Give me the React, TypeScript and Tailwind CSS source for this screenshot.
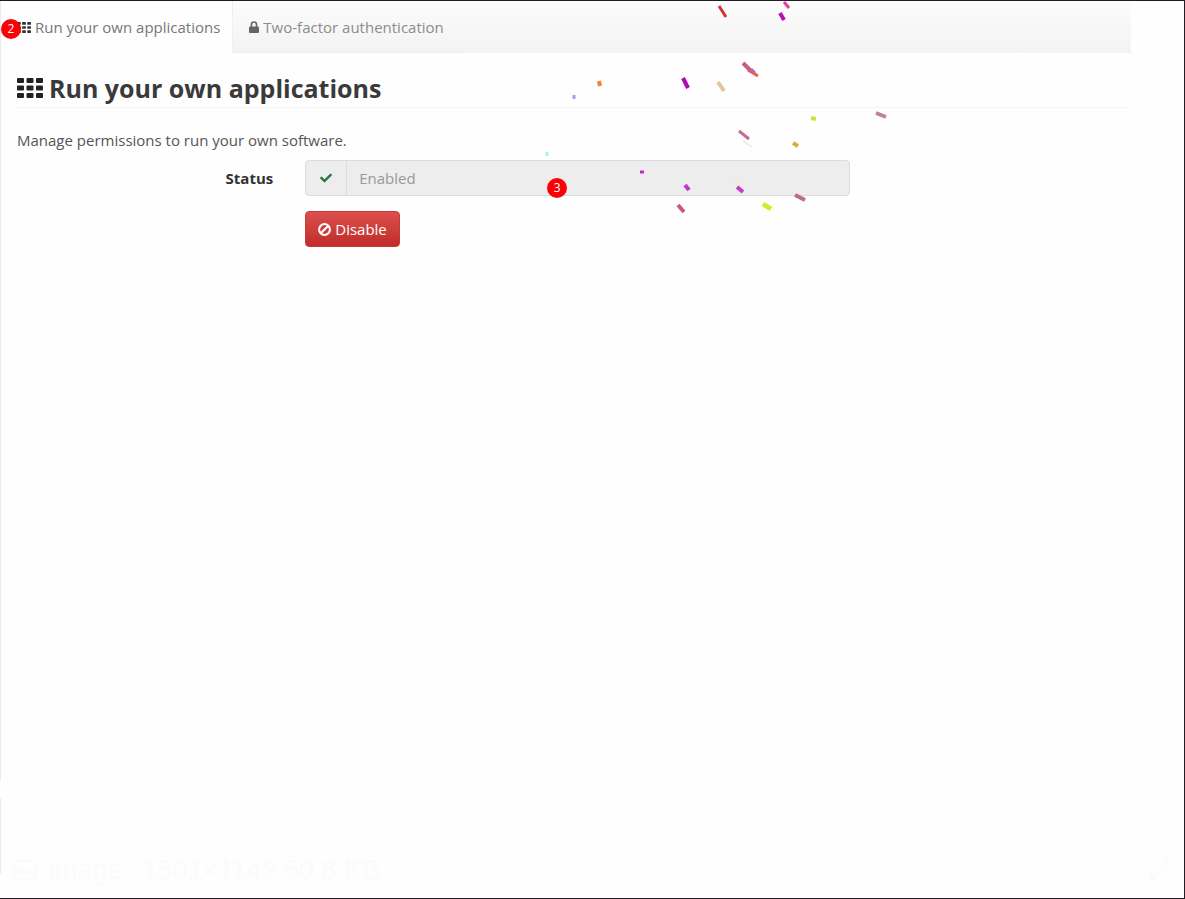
import { FaCheck } from "react-icons/fa";

type Piece = {
  x1: number;
  y1: number;
  x2: number;
  y2: number;
  color: string;
  width?: number;
};

const confetti: Piece[] = [
  { x1: 719, y1: 6, x2: 726, y2: 17, color: "#dc3030" },
  { x1: 784, y1: 2, x2: 789, y2: 8, color: "#e83aa5" },
  { x1: 780, y1: 13, x2: 784, y2: 20, color: "#b411b9", width: 4 },
  { x1: 748, y1: 70, x2: 758, y2: 76, color: "#f0603c" },
  { x1: 743, y1: 63, x2: 751, y2: 71, color: "#c9607f", width: 4 },
  { x1: 751, y1: 69, x2: 755, y2: 73, color: "#b565bd" },
  { x1: 718, y1: 82, x2: 724, y2: 91, color: "#e3c79c", width: 4 },
  { x1: 683, y1: 78, x2: 688, y2: 88, color: "#b306b6", width: 4 },
  { x1: 599, y1: 81, x2: 600, y2: 86, color: "#f5802e", width: 4 },
  { x1: 574, y1: 95, x2: 574, y2: 99, color: "#a79bfa", width: 3 },
  { x1: 547, y1: 152, x2: 547, y2: 156, color: "#a8f7e2", width: 3 },
  { x1: 640, y1: 172, x2: 644, y2: 172, color: "#bd2cc4", width: 3 },
  { x1: 685, y1: 185, x2: 689, y2: 190, color: "#bd3cc6", width: 4 },
  { x1: 678, y1: 205, x2: 684, y2: 212, color: "#c85a76", width: 4 },
  { x1: 811, y1: 118, x2: 816, y2: 119, color: "#c5e63f", width: 4 },
  { x1: 876, y1: 113, x2: 886, y2: 117, color: "#bd8398", width: 4 },
  { x1: 739, y1: 131, x2: 749, y2: 139, color: "#bf6f97" },
  { x1: 743, y1: 141, x2: 752, y2: 147, color: "#f8ecdc", width: 2 },
  { x1: 793, y1: 143, x2: 798, y2: 146, color: "#dcae36", width: 4 },
  { x1: 735, y1: 182, x2: 740, y2: 186, color: "#f6e8bf", width: 2 },
  { x1: 737, y1: 187, x2: 743, y2: 192, color: "#c63cce", width: 4 },
  { x1: 795, y1: 195, x2: 805, y2: 200, color: "#bc6b92", width: 4 },
  { x1: 763, y1: 204, x2: 771, y2: 209, color: "#c8f02c", width: 5 },
];

const Confetti = () => (
  <svg
    className="pointer-events-none absolute left-0 top-0"
    width="900"
    height="220"
    viewBox="0 1 900 220"
    aria-hidden="true"
  >
    {confetti.map((p, i) => (
      <line
        key={i}
        x1={p.x1}
        y1={p.y1}
        x2={p.x2}
        y2={p.y2}
        stroke={p.color}
        strokeWidth={p.width ?? 3}
      />
    ))}
  </svg>
);

const GridIcon = ({ className }: { className: string }) => (
  <svg className={className} viewBox="0 0 26 20" fill="currentColor" aria-hidden="true">
    {[0, 7.5, 15].map((y) =>
      [0, 9.5, 19].map((x) => (
        <rect key={`${x}-${y}`} x={x} y={y} width="7" height="5" rx="1" />
      ))
    )}
  </svg>
);

const LockIcon = () => (
  <svg className="h-3 w-2.5" viewBox="0 0 10 12" aria-hidden="true">
    <path d="M2.5 6V3.5a2.5 2.5 0 0 1 5 0V6" fill="none" stroke="currentColor" strokeWidth="1.6" />
    <rect y="5.5" width="10" height="6.5" rx="0.9" fill="currentColor" />
  </svg>
);

const BanIcon = () => (
  <svg className="size-[13px]" viewBox="0 0 12 12" fill="none" stroke="currentColor" strokeWidth="1.9" aria-hidden="true">
    <circle cx="6" cy="6" r="5" />
    <path d="M2.5 9.5 9.5 2.5" />
  </svg>
);

const App = () => {
  return (
    <div className="relative flex min-h-screen border-y border-r border-[#1f1d20] bg-[#fefefe] font-['Open_Sans',sans-serif] text-[15px] leading-5 text-[#555]">
      {/* Left edge */}
      <div className="flex w-px flex-col gap-[18px] pb-6">
        <div className="grow bg-[#e8ebef]" />
        <div className="h-[76px] bg-[#e8ebef]" />
      </div>

      <div className="flex min-w-0 grow flex-col">
        {/* Tabs */}
        <nav className="mr-[53px] flex h-[52px] bg-linear-to-b from-[#fcfcfc] to-[#f3f3f3]">
          <a
            href="#applications"
            className="relative flex items-center gap-1 bg-[#fefefe] pl-4 pr-3 text-[#777]"
          >
            <span className="text-[#333]">
              <GridIcon className="h-[11px] w-3.5" />
            </span>
            Run your own applications
            <span className="absolute left-0 top-[18px] flex size-5 items-center justify-center rounded-full bg-[#fb0007] text-xs text-white">
              2
            </span>
          </a>
          <a
            href="#two-factor"
            className="flex items-center gap-1 border-b border-l border-[#f0f0f0] px-4 text-[#8c8c8c]"
          >
            <span className="text-[#666]">
              <LockIcon />
            </span>
            Two-factor authentication
          </a>
        </nav>

        <main>
          <h1 className="mr-[53px] ml-4 flex h-[55px] items-center gap-1.5 border-b border-[#f6f6f6] pt-4 text-[25px] font-bold text-[#3a3a3a]">
            <span className="text-[#222]">
              <GridIcon className="h-5 w-[26px]" />
            </span>
            Run your own applications
          </h1>
          <p className="mt-[22px] ml-4">Manage permissions to run your own software.</p>

          <form className="mt-[10px] grid grid-cols-4 gap-y-[15px] pr-[30px]">
            <label
              htmlFor="status"
              className="flex items-center justify-end pr-4 font-bold text-[#333]"
            >
              Status
            </label>
            <div className="relative col-span-2 px-4">
              <div className="flex h-9 overflow-hidden rounded border border-[#dcdcdc] bg-[#ededed]">
                <span className="flex w-10 shrink-0 items-center justify-center">
                  <FaCheck className="size-3 text-[#2c7a3a]" />
                </span>
                <input
                  id="status"
                  type="text"
                  value="Enabled"
                  disabled
                  className="min-w-0 grow border-l border-[#dcdcdc] px-3 text-[#999]"
                />
              </div>
              <span className="absolute left-[258px] top-[18px] flex size-5 items-center justify-center rounded-full bg-[#fb0007] text-xs text-white">
                3
              </span>
            </div>
            <div className="col-span-2 col-start-2 px-4">
              <button
                type="button"
                className="flex h-9 items-center gap-1 rounded border border-[#c43a3a] bg-linear-to-b from-[#dc4f4c] to-[#c02c2a] px-3 text-white"
              >
                <BanIcon />
                Disable
              </button>
            </div>
          </form>
        </main>

        {/* Image caption */}
        <footer className="mt-auto flex items-center justify-between px-3 pb-4 font-['Liberation_Sans',sans-serif] text-[27px] text-[#fbfbfb]">
          <div className="flex items-center gap-3">
            <svg className="h-5 w-6" viewBox="0 0 24 20" fill="none" stroke="currentColor" strokeWidth="2" aria-hidden="true">
              <rect x="1" y="1" width="22" height="18" rx="2" />
              <path d="m3 15 6-6 5 5 3-3 5 5" />
            </svg>
            <span>image</span>
            <span className="ml-2">1501×1142 50.8 KB</span>
          </div>
          <svg className="size-6" viewBox="0 0 24 24" fill="none" stroke="currentColor" strokeWidth="2" aria-hidden="true">
            <path d="M15 3h6v6M9 21H3v-6M21 3 3 21" />
          </svg>
        </footer>
      </div>

      <Confetti />
    </div>
  );
};

export default App;
